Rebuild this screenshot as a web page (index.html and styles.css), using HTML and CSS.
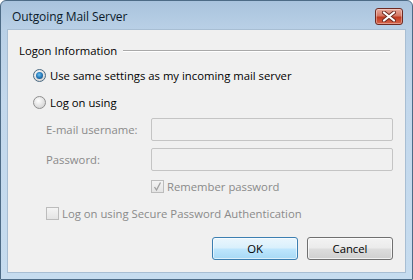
FILE: index.html
```html
<!DOCTYPE html>
<html>
<head>
<meta charset="utf-8">
<link rel="stylesheet" href="styles.css">
</head>
<body>
<div class="window">
  <div class="titlebar">
    <span class="title">Outgoing Mail Server</span>
    <div class="close">
      <svg width="14" height="11" viewBox="0 0 14 11">
        <path d="M2 1.5 L12 9.5 M12 1.5 L2 9.5" stroke="#6b2a22" stroke-width="4" stroke-linecap="round"/>
        <path d="M2 1.5 L12 9.5 M12 1.5 L2 9.5" stroke="#ffffff" stroke-width="2.2" stroke-linecap="round"/>
      </svg>
    </div>
  </div>
  <div class="content">
    <div class="group-head">
      <span class="group-title">Logon Information</span>
      <span class="group-line"></span>
    </div>
    <div class="row radio-row first">
      <span class="radio checked"></span>
      <span class="lbl">Use same settings as my incoming mail server</span>
    </div>
    <div class="row radio-row second">
      <span class="radio"></span>
      <span class="lbl">Log on using</span>
    </div>
    <div class="field-row f1">
      <span class="field-lbl">E-mail username:</span>
      <span class="input"></span>
    </div>
    <div class="field-row f2">
      <span class="field-lbl">Password:</span>
      <span class="input"></span>
    </div>
    <div class="row remember">
      <span class="check checked">
        <svg width="11" height="11" viewBox="0 0 11 11"><path d="M2.5 6 L4.5 9 L8.5 1.5" fill="none" stroke="#a0a0a0" stroke-width="1.3"/></svg>
      </span>
      <span class="lbl dis">Remember password</span>
    </div>
    <div class="row spa">
      <span class="check"></span>
      <span class="lbl dis">Log on using Secure Password Authentication</span>
    </div>
    <div class="buttons">
      <button class="btn ok">OK</button>
      <button class="btn">Cancel</button>
    </div>
  </div>
</div>
</body>
</html>
```
FILE: styles.css
```css
html, body {
  margin: 0;
  padding: 0;
  background: #ffffff;
}
body {
  width: 413px;
  height: 280px;
  overflow: hidden;
  font-family: "Open Sans", "Noto Sans", sans-serif;
  font-size: 11.3px;
}
.window {
  box-sizing: border-box;
  width: 413px;
  height: 280px;
  border: 1px solid #4d6b86;
  border-radius: 6px 6px 0 0;
  background: linear-gradient(180deg, #a9c3dd 0px, #b9d0e6 28px, #c3d8ec 100px, #c6dcef 100%);
  display: flex;
  flex-direction: column;
}
.titlebar {
  height: 28px;
  display: flex;
  align-items: center;
  justify-content: space-between;
  padding: 0 9px 0 11px;
}
.title {
  color: #0b1a2a;
  font-size: 12px;
  margin-top: 3px;
  letter-spacing: -0.1px;
}
.close {
  box-sizing: border-box;
  width: 28px;
  height: 17px;
  margin-top: 2px;
  border: 1px solid #6e2a22;
  border-radius: 3px;
  background: linear-gradient(180deg, #e9a99c 0%, #d47764 45%, #c0391f 55%, #d5654c 100%);
  display: flex;
  align-items: center;
  justify-content: center;
  box-shadow: inset 0 0 0 1px rgba(255,255,255,0.35);
}
.content {
  box-sizing: border-box;
  flex: 1;
  margin: 0 6px 6px 6px;
  background: #f0f0f0;
  border: 1px solid #a8bed3;
  color: #000;
}
.group-head {
  display: flex;
  align-items: center;
  height: 16px;
  margin: 12px 15px 0 11px;
}
.group-title {
  color: #000;
  white-space: nowrap;
}
.group-line {
  flex: 1;
  height: 0;
  border-top: 1px solid #a9a9a9;
  border-bottom: 1px solid #ffffff;
  margin-left: 6px;
  margin-top: 1px;
}
.row {
  display: flex;
  align-items: center;
  height: 16px;
}
.radio-row {
  margin-left: 25px;
}
.radio-row.first { margin-top: 9px; }
.radio-row.second { margin-top: 11px; }
.radio {
  box-sizing: border-box;
  width: 13px;
  height: 13px;
  border-radius: 50%;
  border: 1px solid #8f8f8f;
  background: radial-gradient(circle at 40% 35%, #ffffff 0%, #e6e6e6 45%, #c9c9c9 100%);
  margin-right: 4px;
  position: relative;
}
.radio.checked {
  border-color: #4b6a82;
}
.radio.checked::after {
  content: "";
  position: absolute;
  left: 2px;
  top: 2px;
  width: 7px;
  height: 7px;
  border-radius: 50%;
  background: radial-gradient(circle at 45% 40%, #6fc4f0 0%, #2a7fc0 45%, #0d3c66 100%);
}
.lbl {
  white-space: nowrap;
}
.lbl.dis, .field-lbl {
  color: #8a8a8a;
}
.field-row {
  display: flex;
  align-items: center;
  height: 23px;
  margin-left: 38px;
  margin-right: 12px;
}
.field-row.f1 { margin-top: 8px; }
.field-row.f2 { margin-top: 7px; }
.field-lbl {
  width: 105px;
  white-space: nowrap;
}
.input {
  box-sizing: border-box;
  flex: 1;
  height: 23px;
  border: 1px solid #c4c4c4;
  border-radius: 2px;
  background: #f0f0f0;
}
.check {
  box-sizing: border-box;
  width: 13px;
  height: 13px;
  border: 1px solid #bcbcbc;
  background: linear-gradient(180deg, #f4f4f4, #e4e4e4);
  margin-right: 3px;
  display: flex;
  align-items: center;
  justify-content: center;
}
.remember {
  margin-left: 143px;
  margin-top: 7px;
}
.spa {
  margin-left: 38px;
  margin-top: 11px;
}
.buttons {
  display: flex;
  justify-content: flex-end;
  gap: 9px;
  margin-top: 16px;
  margin-right: 12px;
}
.btn {
  box-sizing: border-box;
  width: 86px;
  height: 23px;
  font-family: inherit;
  font-size: 11.3px;
  color: #000;
  border: 1px solid #707070;
  border-radius: 3px;
  background: linear-gradient(180deg, #f3f3f3 0%, #ebebeb 48%, #dddddd 52%, #cfcfcf 100%);
  box-shadow: inset 0 0 0 1px rgba(255,255,255,0.7);
  padding: 0;
}
.btn.ok {
  border-color: #3c7fb1;
  background: linear-gradient(180deg, #eaf6fd 0%, #d9f0fc 48%, #bee6fd 52%, #a7d9f5 100%);
  box-shadow: inset 0 0 0 1px rgba(255,255,255,0.6);
}
```
